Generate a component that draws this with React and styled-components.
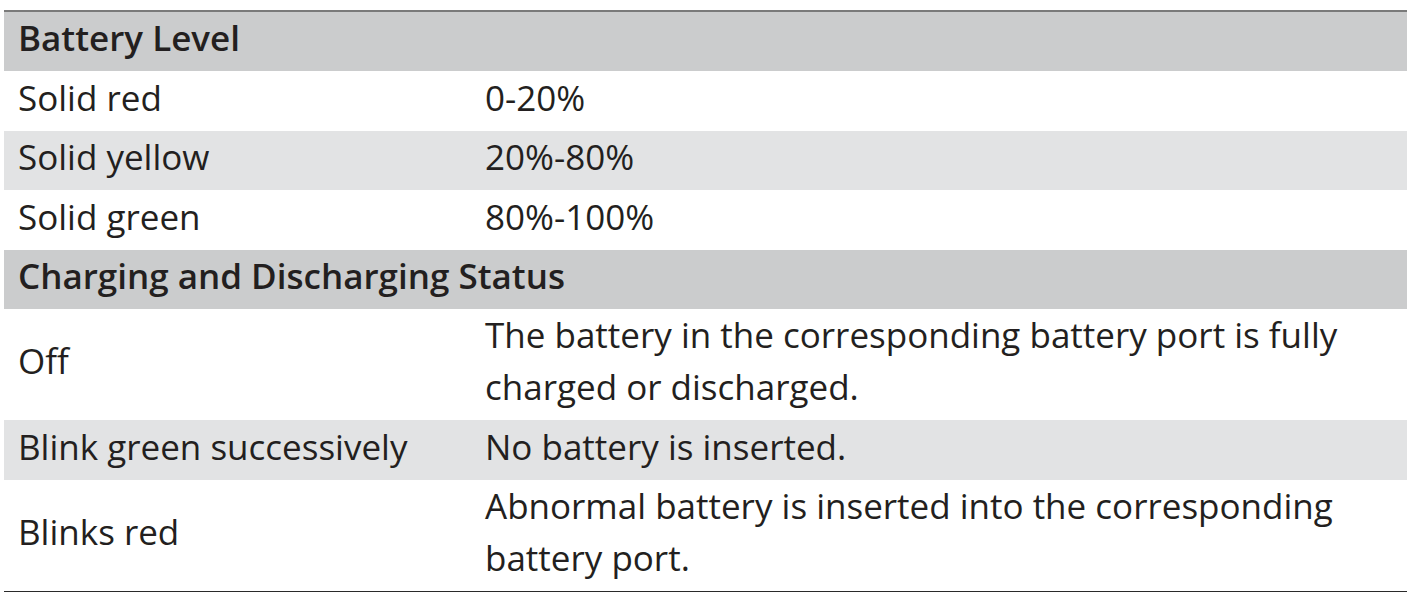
import React from 'react';
import styled, { createGlobalStyle } from 'styled-components';

const GlobalStyle = createGlobalStyle`
    body {
        margin: 0;
        background: #fff;
        font-family: "Open Sans", "Noto Sans", sans-serif;
        color: #231f20;
    }
`

const Wrapper = styled.div`
    padding: 10px 12px 0 4px;
`

const Table = styled.table`
    width: 1403px;
    border-collapse: collapse;
    border-top: 2px solid #7a7a7a;
    border-bottom: 1px solid #2a2a2a;
    font-size: 35px;
    line-height: 52px;
`

const HeadCell = styled.th`
    background: #cbcccd;
    font-weight: 600;
    text-align: left;
    padding: 0 14px 7px;
`

const Row = styled.tr`
    background: ${props => props.$shaded ? '#e2e3e4' : '#fff'};
`

const Cell = styled.td`
    padding: 0.5px 13px 7px 14px;
    vertical-align: middle;
    width: ${props => props.$first ? '440px' : 'auto'};
`

const sections = [
    {
        title: 'Battery Level',
        rows: [
            ['Solid red', '0-20%'],
            ['Solid yellow', '20%-80%'],
            ['Solid green', '80%-100%'],
        ],
    },
    {
        title: 'Charging and Discharging Status',
        rows: [
            ['Off', <>The battery in the corresponding battery port is fully<br />charged or discharged.</>],
            ['Blink green successively', 'No battery is inserted.'],
            ['Blinks red', <>Abnormal battery is inserted into the corresponding<br />battery port.</>],
        ],
    },
]

const App = () => {
    return (
        <>
            <GlobalStyle />
            <Wrapper>
                <Table>
                    <tbody>
                        {sections.map(section => (
                            <React.Fragment key={section.title}>
                                <tr>
                                    <HeadCell colSpan={2}>{section.title}</HeadCell>
                                </tr>
                                {section.rows.map((row, i) => (
                                    <Row key={i} $shaded={i % 2 === 1}>
                                        <Cell $first>{row[0]}</Cell>
                                        <Cell>{row[1]}</Cell>
                                    </Row>
                                ))}
                            </React.Fragment>
                        ))}
                    </tbody>
                </Table>
            </Wrapper>
        </>
    )
}

export default App;
